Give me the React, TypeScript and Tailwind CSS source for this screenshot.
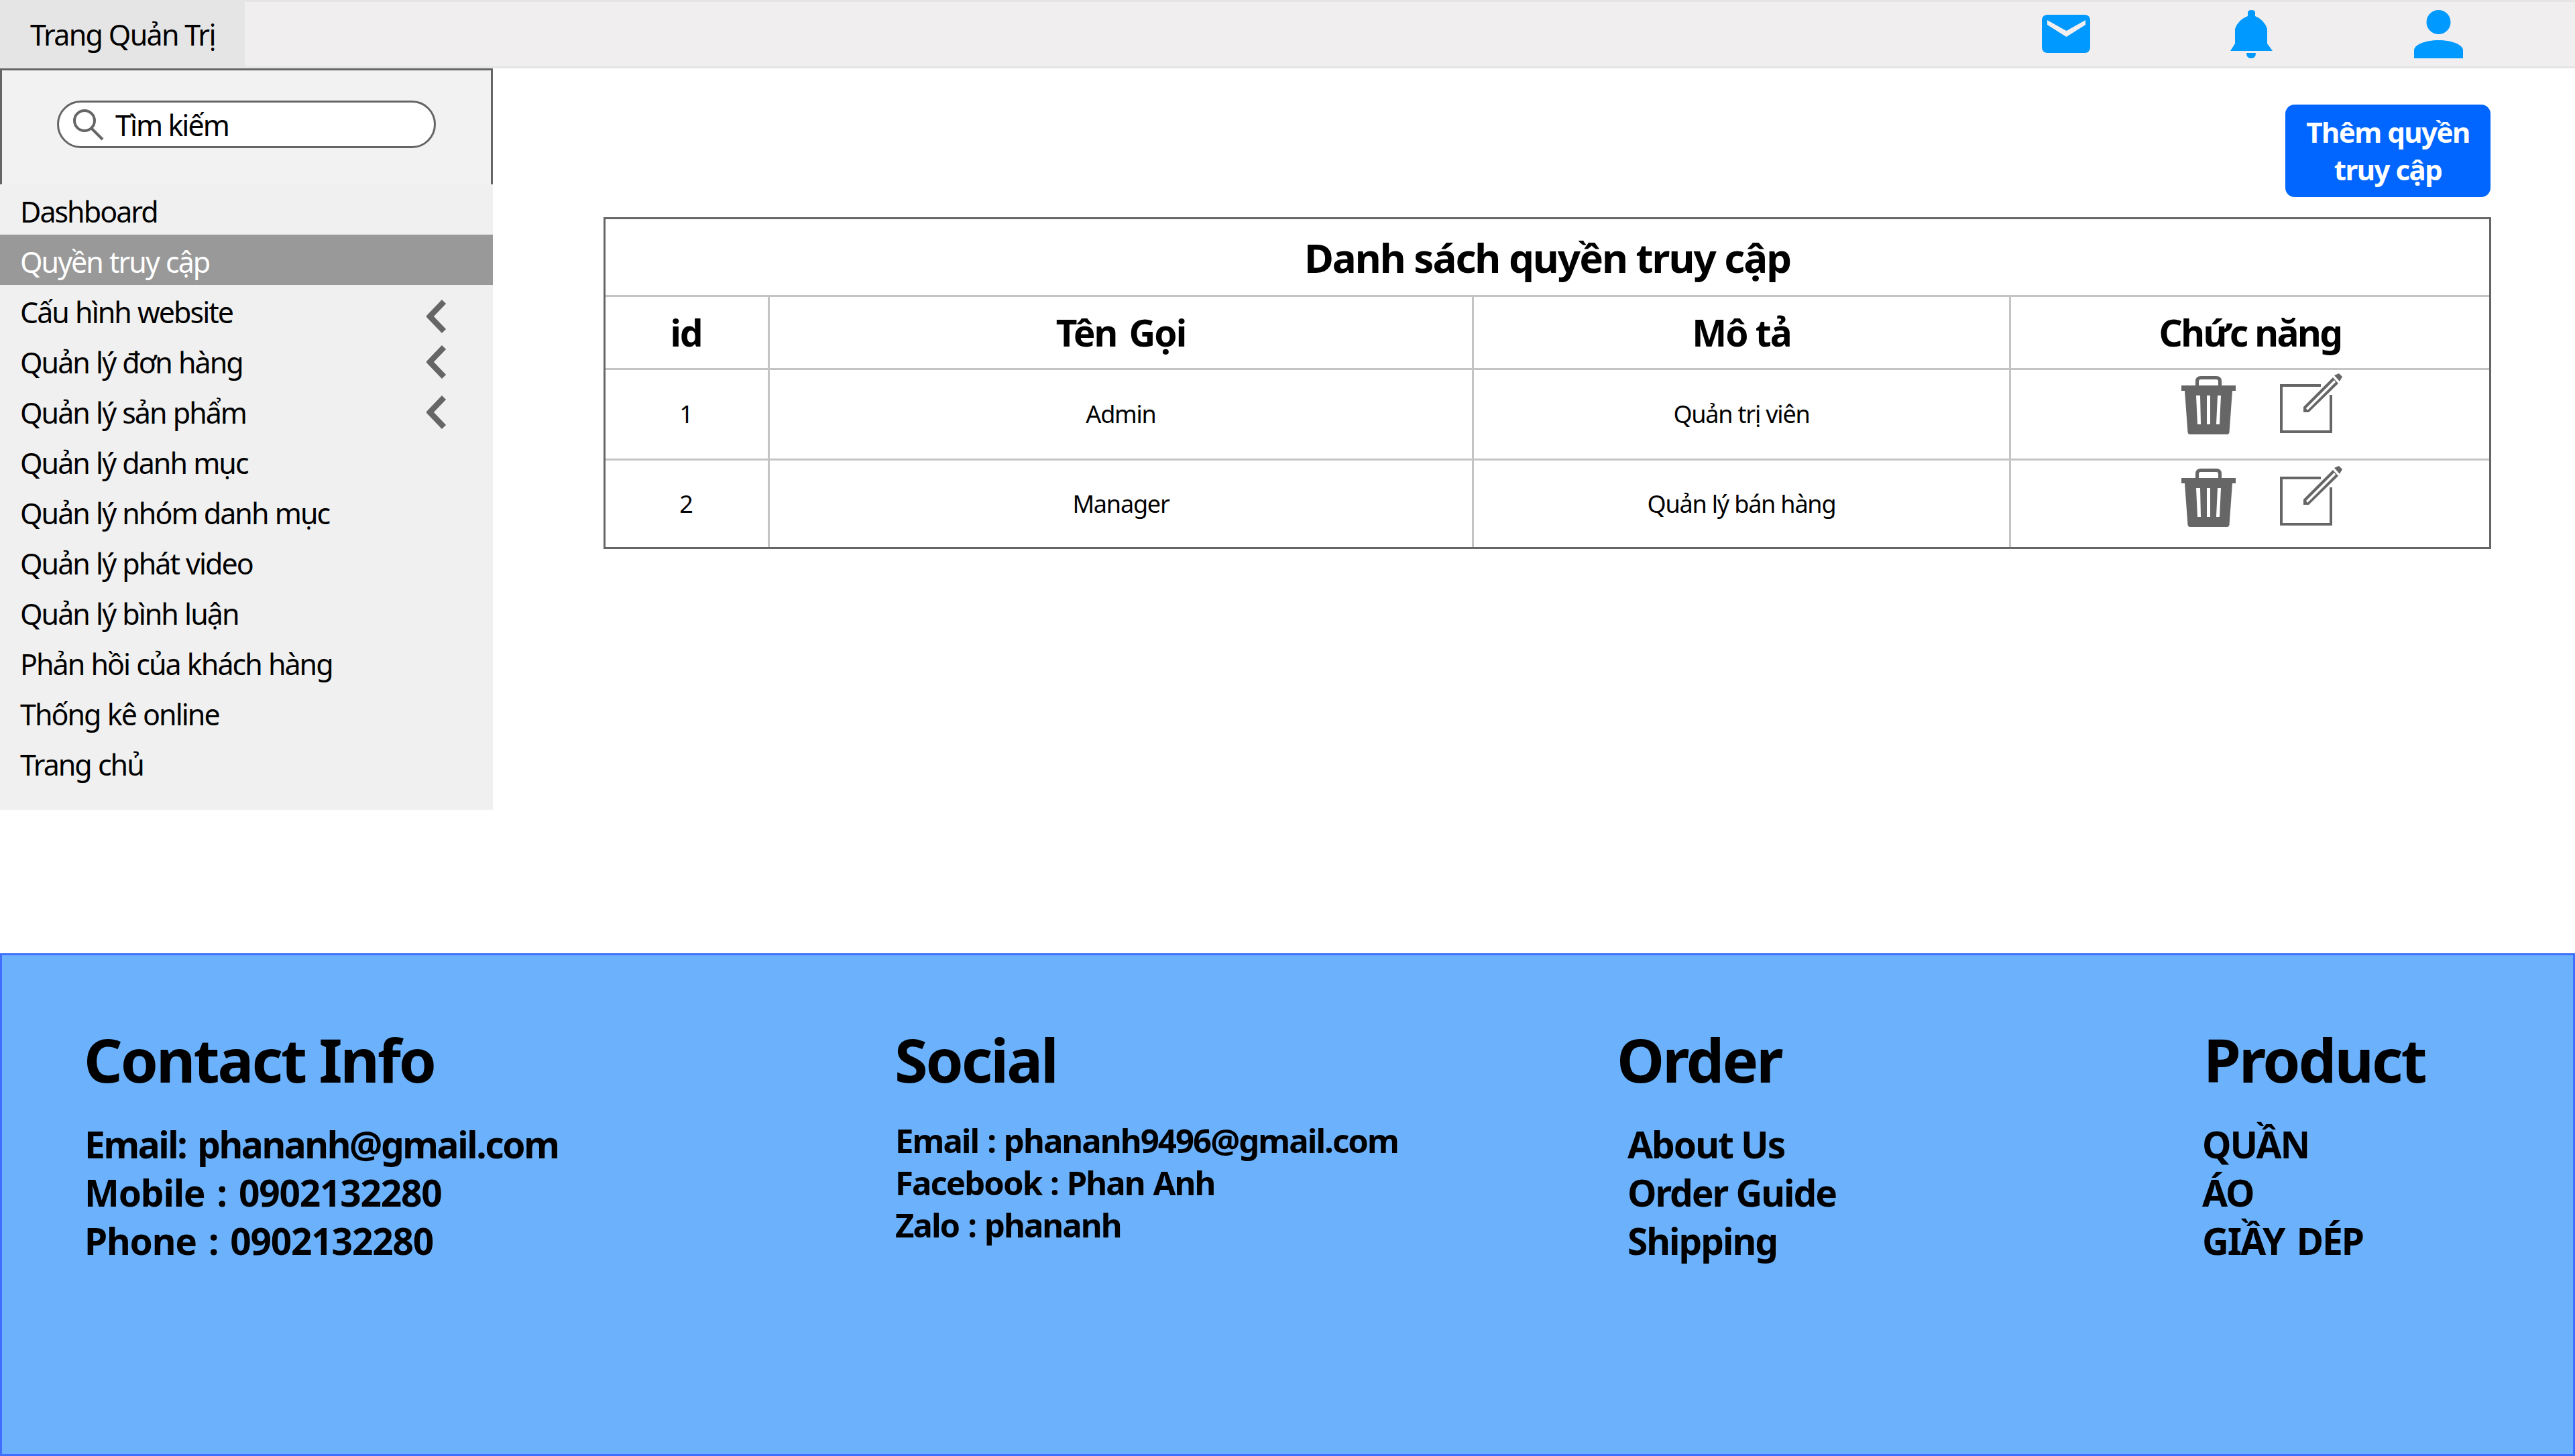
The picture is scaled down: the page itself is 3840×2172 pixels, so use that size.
const menu: [string, number][] = [
  ["Dashboard", 0], ["Quyền truy cập", 0], ["Cấu hình website", 1], ["Quản lý đơn hàng", 2], ["Quản lý sản phẩm", 2],
  ["Quản lý danh mục", 0], ["Quản lý nhóm danh mục", 0], ["Quản lý phát video", 0], ["Quản lý bình luận", 0],
  ["Phản hồi của khách hàng", 0], ["Thống kê online", 0], ["Trang chủ", 0],
];

function Chevron({ first }: { first: boolean }) {
  return (
    <svg viewBox="0 0 30 50" className={first ? "w-[30px] h-[50px] mt-[22px]" : "w-[30px] h-[50px] mt-[15px]"}>
      <path d="M26 3 L5 25 L26 47" fill="none" stroke="#666666" strokeWidth="8.5" />
    </svg>
  );
}

function Trash() {
  return (
    <svg viewBox="0 0 81 87" className="w-[81px] h-[87px] shrink-0">
      <path d="M23.5 16 V8 Q23.5 2.5 29 2.5 H52 Q57.5 2.5 57.5 8 V16" fill="none" stroke="#666666" strokeWidth="5" />
      <path d="M0 14 H81 V22 H76 L71.5 84 Q71 87 68 87 H13 Q10 87 9.5 84 L5 22 H0 Z" fill="#666666" />
      <path d="M22 29 H28 L29 72 H24 Z M38 29 H43 V72 H38 Z M54 29 H59 L57 72 H52 Z" fill="#ffffff" />
    </svg>
  );
}

function Edit() {
  return (
    <svg viewBox="0 0 94 89" className="w-[94px] h-[89px] shrink-0">
      <path d="M61 18 H2 V87 H76 V32" fill="none" stroke="#666666" strokeWidth="4" />
      <path d="M35 50 L79 6 L87 15 L43 58 H35 Z" fill="#666666" />
      <path d="M39 52 L81 10 L83 13 L41 55 Z" fill="#ffffff" />
      <path d="M81 3 L88 0 L93 5 L89 12 Z" fill="#666666" />
    </svg>
  );
}

function Row({ id, name, desc, last }: { id: string; name: string; desc: string; last: boolean }) {
  return (
    <div className={last ? "grid grid-cols-[245px_1050px_801px_1fr] h-[129px] text-[36px] tracking-[-1.2px]" : "grid grid-cols-[245px_1050px_801px_1fr] h-[135px] border-b-[3px] border-[#c4c4c4] text-[36px] tracking-[-1.2px]"}>
      <div className="flex items-center justify-center border-r-[3px] border-[#c4c4c4] pr-[2px]">{id}</div>
      <div className="flex items-center justify-center border-r-[3px] border-[#c4c4c4]">{name}</div>
      <div className="flex items-center justify-center border-r-[3px] border-[#c4c4c4]">{desc}</div>
      <div className={last ? "flex items-start gap-[66px] pl-[254px] pt-[12px]" : "flex items-start gap-[66px] pl-[254px] pt-[9px]"}>
        <Trash />
        <div className="-mt-[4px]"><Edit /></div>
      </div>
    </div>
  );
}

function FooterCol({ title, items, cls, itemCls }: { title: string; items: [string, string][]; cls: string; itemCls: string }) {
  return (
    <div className={cls}>
      <div className="h-[130px] flex items-center text-[90px] font-bold leading-none tracking-[-3px] -ml-[1px]">{title}</div>
      <div className={itemCls}>
        {items.map(([t, c]) => <div key={t} className={c}>{t}</div>)}
      </div>
    </div>
  );
}

export default function App() {
  return (
    <div className="w-[3840px] h-[2172px] bg-white flex flex-col font-['Noto_Sans',sans-serif] text-black overflow-hidden">
      <header className="h-[102px] shrink-0 bg-[#f0eeef] border-y-[3px] border-[#e5e5e5] flex items-stretch">
        <div className="w-[365px] -my-[3px] bg-[#e5e5e5] flex items-center pl-[45px] pt-[2px] text-[43px] tracking-[-1.7px]">Trang Quản Trị</div>
        <div className="flex-1 flex items-start">
          <svg viewBox="0 0 72 57" className="w-[72px] h-[57px] ml-[2680px] mt-[19px]">
            <rect width="72" height="57" rx="8" fill="#0099ff" />
            <path d="M8 8 L36.5 24 L65 8 V15 L36.5 33 L8 15 Z" fill="#f0eeef" />
          </svg>
          <svg viewBox="0 0 63 72" className="w-[63px] h-[72px] ml-[209px] mt-[12px]">
            <path d="M26 9 V4 Q26 0 31.5 0 Q37 0 37 4 V9 Q50 14 55 28 V50 L63 61 H0 L7 50 V28 Q12 14 26 9 Z" fill="#0099ff" />
            <path d="M24 64 H38 Q38 72 31 72 Q24 72 24 64 Z" fill="#0099ff" />
          </svg>
          <svg viewBox="0 0 73 72" className="w-[73px] h-[72px] ml-[211px] mt-[12px]">
            <ellipse cx="36.5" cy="18" rx="18" ry="18" fill="#0099ff" />
            <path d="M0 72 V60 C0 52 16 45 36.5 45 S73 52 73 60 V72 Z" fill="#0099ff" />
          </svg>
        </div>
      </header>

      <div className="h-[1320px] shrink-0 flex items-start">
        <aside className="w-[735px] shrink-0">
          <div className="h-[173px] bg-[#f2f2f2] border-t-[3px] border-x-[3px] border-[#666666] pt-[45px] pl-[82px]">
            <div className="w-[565px] h-[71px] rounded-full border-[3px] border-[#666666] bg-white flex items-center pl-[20px] text-[43px] tracking-[-2px]">
              <svg viewBox="0 0 48 48" className="w-[48px] h-[48px] shrink-0">
                <circle cx="18" cy="18" r="15" fill="none" stroke="#666666" strokeWidth="4" />
                <path d="M28 29 L45 46" fill="none" stroke="#666666" strokeWidth="4" />
              </svg>
              <span className="ml-[16px] pt-[3px]">Tìm kiếm</span>
            </div>
          </div>
          <nav className="bg-[#f0f0f0] pb-[33px] text-[43px] tracking-[-2px] [word-spacing:1px]">
            {menu.map(([t, c], i) => (
              <div key={t} className={i === 1 ? "h-[75px] flex pl-[30px] bg-[#999999] text-white items-center" : "h-[75px] flex pl-[30px] items-center"}>
                <span className="flex-1 pt-[7px]">{t}</span>
                {c > 0 && <div className="h-[75px] pr-[69px] flex items-start"><Chevron first={c === 1} /></div>}
              </div>
            ))}
          </nav>
        </aside>

        <main className="flex-1 flex flex-col items-start pl-[165px]">
          <button className="ml-[2508px] mt-[54px] w-[306px] h-[138px] rounded-[14px] bg-[#0066ff] text-white text-[42px] font-bold leading-[56px] tracking-[-1.5px] text-center">Thêm quyền<br />truy cập</button>
          <div className="mt-[30px] w-[2815px] h-[495px] border-[3px] border-[#666666]">
            <div className="h-[116px] border-b-[3px] border-[#c4c4c4] flex items-center justify-center text-[60px] font-bold tracking-[-2px]">Danh sách quyền truy cập</div>
            <div className="grid grid-cols-[245px_1050px_801px_1fr] h-[109px] border-b-[3px] border-[#c4c4c4] text-[55px] font-bold tracking-[-2px]">
              <div className="flex items-center justify-center border-r-[3px] border-[#c4c4c4] pr-[2px]">id</div>
              <div className="flex items-center justify-center border-r-[3px] border-[#c4c4c4] [word-spacing:6px]">Tên Gọi</div>
              <div className="flex items-center justify-center border-r-[3px] border-[#c4c4c4]">Mô tả</div>
              <div className="flex items-center justify-center tracking-[-2.5px]">Chức năng</div>
            </div>
            <Row id="1" name="Admin" desc="Quản trị viên" last={false} />
            <Row id="2" name="Manager" desc="Quản lý bán hàng" last={true} />
          </div>
        </main>
      </div>

      <footer className="flex-1 bg-[#6bb1fb] border-[3px] border-[#3f6fff] flex items-start pt-[90px]">
        <FooterCol title="Contact Info" items={[["Email: phananh@gmail.com", "tracking-[-2.4px]"], ["Mobile : 0902132280", ""], ["Phone : 0902132280", ""]]} cls="w-[1332px] shrink-0 pl-[123px]" itemCls="text-[55px] font-bold leading-[72px] tracking-[-1.2px] [word-spacing:5px] mt-[26px]" />
        <FooterCol title="Social" items={[["Email : phananh9496@gmail.com", ""], ["Facebook : Phan Anh", ""], ["Zalo : phananh", ""]]} cls="w-[1077px] shrink-0" itemCls="text-[49px] font-bold leading-[63px] tracking-[-1.9px] [word-spacing:2px] mt-[25px]" />
        <FooterCol title="Order" items={[["About Us", ""], ["Order Guide", ""], ["Shipping", ""]]} cls="w-[875px] shrink-0" itemCls="text-[55px] font-bold leading-[72px] tracking-[-2px] mt-[26px] pl-[15px]" />
        <FooterCol title="Product" items={[["QUẦN", ""], ["ÁO", ""], ["GIẦY DÉP", ""]]} cls="w-[500px] shrink-0" itemCls="text-[55px] font-bold leading-[72px] tracking-[-2px] [word-spacing:6px] mt-[26px] -ml-[3px]" />
      </footer>
    </div>
  );
}
